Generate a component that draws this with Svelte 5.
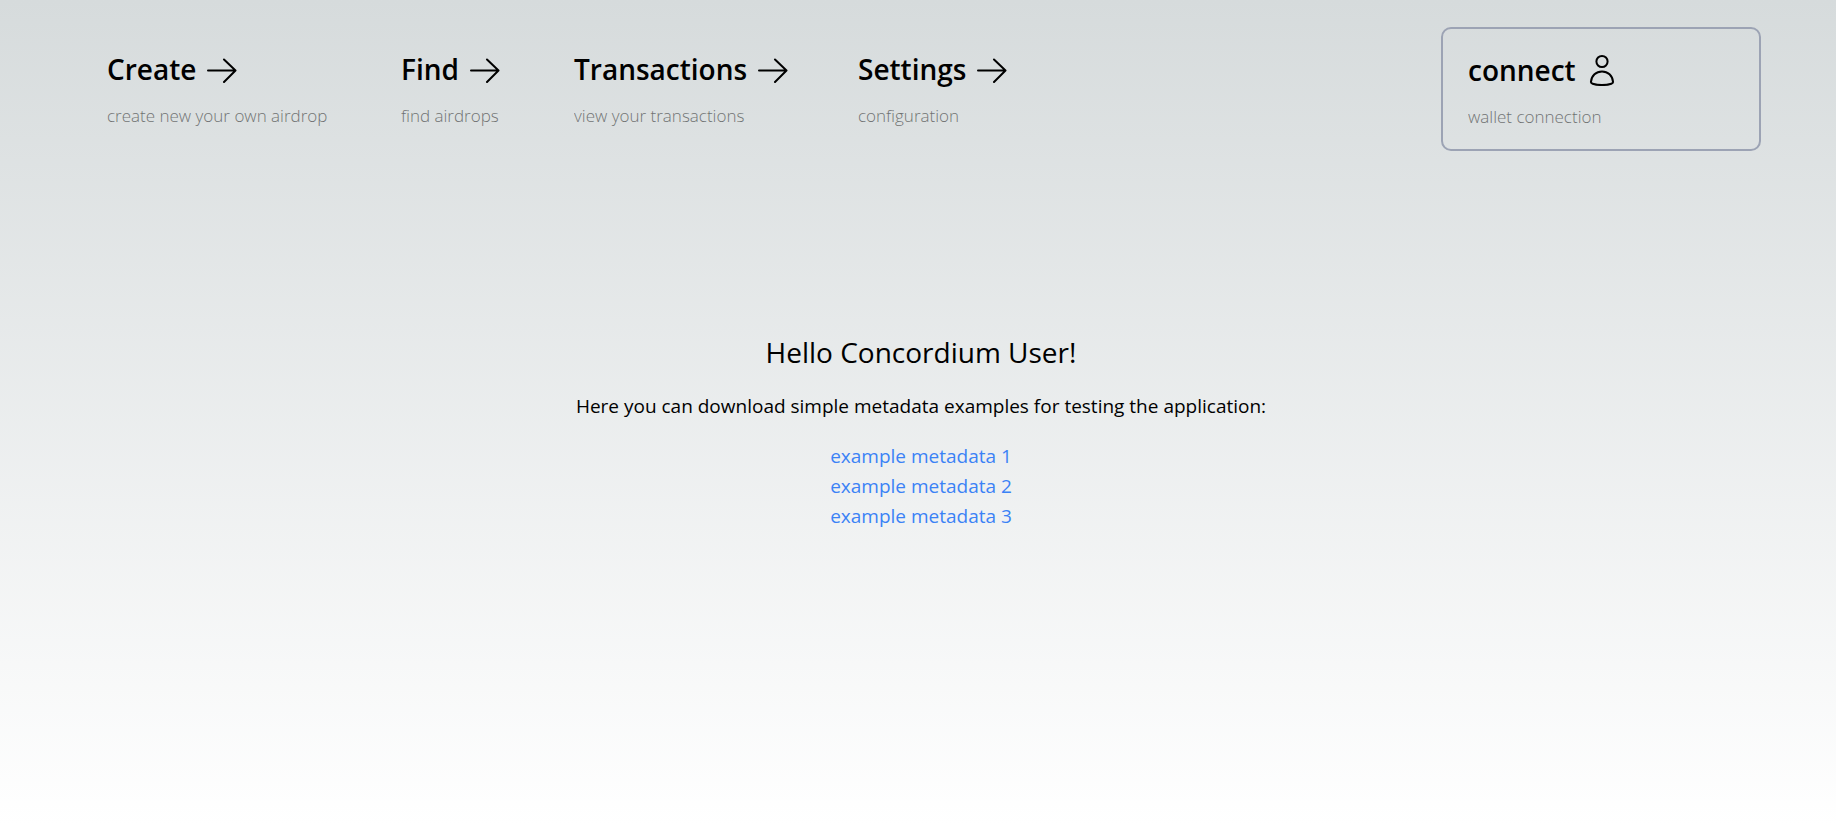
<script>
  const navItems = [
    { title: 'Create', note: 'create new your own airdrop' },
    { title: 'Find', note: 'find airdrops' },
    { title: 'Transactions', note: 'view your transactions' },
    { title: 'Settings', note: 'configuration' }
  ];
  const examples = ['example metadata 1', 'example metadata 2', 'example metadata 3'];
</script>

<div class="page">
  <header>
    <nav>
      {#each navItems as item}
        <a class="entry" href="#{item.title.toLowerCase()}">
          <span class="title">
            {item.title}
            <svg width="30" height="28" viewBox="0 0 30 28" aria-hidden="true">
              <path d="M1 15.5H28M17 4.5L28.5 15.5L17 27" />
            </svg>
          </span>
          <span class="note">{item.note}</span>
        </a>
      {/each}
    </nav>
    <button class="entry connect" type="button">
      <span class="title">
        connect
        <svg class="person" width="26" height="32" viewBox="0 0 26 32" aria-hidden="true">
          <circle cx="13" cy="7.5" r="5.6" />
          <path d="M13 17.4C7.2 17.4 2.4 21.7 1.9 28.1C1.9 29.1 2.6 29.4 3.6 29.7C9.4 31.4 16.6 31.4 22.4 29.7C23.4 29.4 24.1 29.1 24.1 28.1C23.6 21.7 18.8 17.4 13 17.4Z" />
        </svg>
      </span>
      <span class="note">wallet connection</span>
    </button>
  </header>

  <main>
    <h1>Hello Concordium User!</h1>
    <p>Here you can download simple metadata examples for testing the application:</p>
    <ul>
      {#each examples as name}
        <li><a href="#{name.replaceAll(' ', '-')}">{name}</a></li>
      {/each}
    </ul>
  </main>
</div>

<style>
  :global(body) {
    margin: 0;
  }

  .page {
    box-sizing: border-box;
    min-height: 100vh;
    padding: 27px 75px 40px 81px;
    background: linear-gradient(to bottom, rgb(214, 219, 220), rgb(255, 255, 255));
    color: #000;
    font-family: 'Segoe UI', 'Open Sans', 'Noto Sans', sans-serif;
  }

  header {
    display: flex;
    justify-content: space-between;
    align-items: flex-start;
  }

  nav {
    display: grid;
    grid-template-columns: 294px 173px 284px auto;
  }

  .entry {
    box-sizing: border-box;
    display: flex;
    flex-direction: column;
    gap: 17px;
    padding: 24px 26px 18px;
    color: inherit;
    text-align: left;
    text-decoration: none;
    white-space: nowrap;
  }

  .title {
    display: flex;
    align-items: center;
    gap: 11px;
    font-size: 28px;
    font-weight: 600;
    line-height: 36px;
  }

  .note {
    font-size: 17px;
    font-weight: 300;
    line-height: 24px;
    opacity: 0.5;
  }

  svg {
    flex: none;
    fill: none;
    stroke: currentColor;
    stroke-width: 2;
    stroke-linecap: round;
    stroke-linejoin: round;
  }

  .person {
    margin-left: 2px;
  }

  .connect {
    width: 320px;
    padding: 23px 25px 20px;
    border: 2px solid #9ca3b4;
    border-radius: 10px;
    background: transparent;
    font-family: inherit;
    cursor: pointer;
  }

  main {
    display: flex;
    flex-direction: column;
    align-items: center;
    margin-top: 179px;
    text-align: center;
  }

  h1 {
    margin: 0;
    font-size: 28px;
    font-weight: 400;
    line-height: 44px;
  }

  p {
    margin: 17px 0 20px;
    font-size: 19px;
    line-height: 30px;
  }

  ul {
    margin: 0;
    padding: 0;
    list-style: none;
    font-size: 19px;
    line-height: 30px;
  }

  li a {
    color: #3b82f6;
    text-decoration: none;
  }
</style>
